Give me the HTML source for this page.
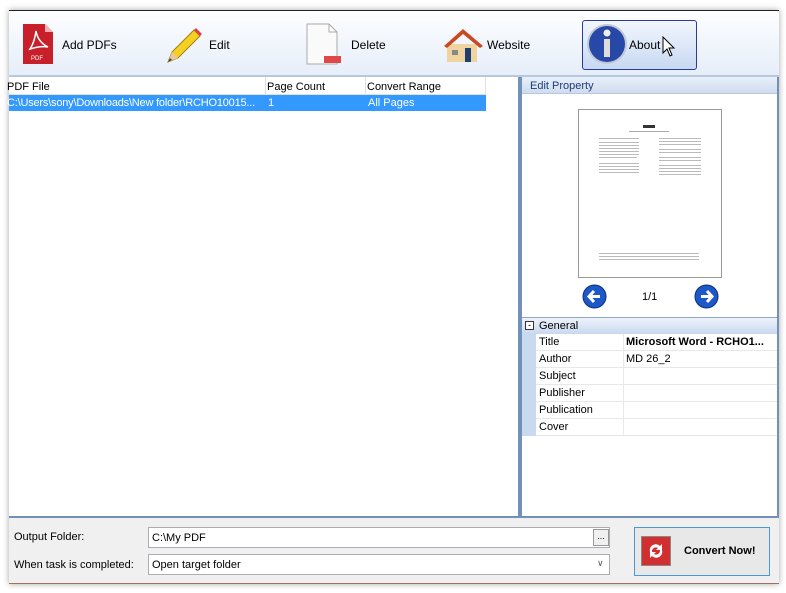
<!DOCTYPE html>
<html><head><meta charset="utf-8"><style>
*{margin:0;padding:0;box-sizing:border-box}
body{width:786px;height:593px;background:#fff;font-family:"Liberation Sans",sans-serif;font-size:11px;color:#000;position:relative;overflow:hidden}
.abs{position:absolute}
.win{left:9px;top:10px;width:770px;height:574px;border-top:1px solid #222;background:#f0f0f0;box-shadow:0 0 6px rgba(0,0,0,.35)}
.tb{left:9px;top:11px;width:770px;height:64px;background:linear-gradient(#fdfeff,#e6eef9)}
.lbl{font-size:12px}
.frame{background:#7191b9}
.cell{position:absolute;border-bottom:1px solid #e8e8e8;height:17px;line-height:17px;font-size:11px}
</style></head><body>
<div class="abs win"></div>
<div class="abs tb"></div>
<div class="abs" style="left:9px;top:75px;width:770px;height:2px;background:#b8c8dc"></div>
<svg class="abs" style="left:22px;top:23px" width="32" height="42"><path d="M1 1h22l8 8v32H1z" fill="#c8202a"/><path d="M23 1v8h8z" fill="#f2b0b0"/><path d="M8 26c4-6 5-12 6-18 1 6 4 12 12 16-6-1-12 0-18 2z" fill="none" stroke="#fff" stroke-width="1.5"/><text x="9" y="37" font-size="6" fill="#fff" font-family="Liberation Sans">PDF</text></svg>
<div class="abs lbl" style="left:62px;top:38px">Add PDFs</div>
<svg class="abs" style="left:162px;top:26px" width="40" height="40"><path d="M6 36l4-10 22-22 6 6-22 22z" fill="#f4d020" stroke="#a08010"/><path d="M6 36l4-10 6 6z" fill="#e8c8a0"/><path d="M6 36l2-4 2 2z" fill="#444"/><path d="M32 4l6 6 2-2-6-6z" fill="#e04050"/></svg>
<div class="abs lbl" style="left:209px;top:38px">Edit</div>
<svg class="abs" style="left:306px;top:23px" width="36" height="42"><path d="M1 1h22l8 8v32H1z" fill="#fafafa" stroke="#aaa"/><path d="M23 1v8h8" fill="none" stroke="#aaa"/><rect x="18" y="33" width="17" height="7" fill="#e04848"/></svg>
<div class="abs lbl" style="left:351px;top:38px">Delete</div>
<svg class="abs" style="left:443px;top:26px" width="42" height="38"><path d="M4 18h30v18H4z" fill="#f0d4a0"/><path d="M1 20L20 3l20 17-3 2L20 8 4 22z" fill="#c84a20"/><rect x="22" y="22" width="6" height="14" fill="#1f3f6f"/><rect x="9" y="24" width="6" height="5" fill="#888"/></svg>
<div class="abs lbl" style="left:487px;top:38px">Website</div>
<div class="abs" style="left:582px;top:20px;width:115px;height:50px;border:1px solid #2a3c9a;border-radius:3px;background:linear-gradient(#f2f6fd,#dde8f8 50%,#c8d8f2)"></div>
<svg class="abs" style="left:585px;top:22px" width="44" height="44"><circle cx="22" cy="22" r="20" fill="#c0c8d8"/><circle cx="22" cy="22" r="18" fill="#2848a8"/><circle cx="22" cy="11" r="3.5" fill="#eee"/><rect x="19" y="17" width="6" height="18" fill="#ddd"/></svg>
<div class="abs lbl" style="left:629px;top:38px">About</div>
<svg class="abs" style="left:662px;top:36px" width="14" height="22"><path d="M1 1v16l4-4 3 7 2-1-3-7h5z" fill="#fff" stroke="#000"/></svg>
<div class="abs" style="left:9px;top:77px;width:510px;height:440px;background:#fff"></div>
<div class="abs" style="left:9px;top:77px;width:477px;height:18px;border-bottom:1px solid #e0e0e0"></div>
<div class="abs" style="left:265px;top:77px;width:1px;height:17px;background:#e0e0e0"></div>
<div class="abs" style="left:365px;top:77px;width:1px;height:17px;background:#e0e0e0"></div>
<div class="abs" style="left:485px;top:77px;width:1px;height:17px;background:#e0e0e0"></div>
<div class="abs" style="left:7px;top:81px;font-size:11px">PDF File</div>
<div class="abs" style="left:267px;top:81px;font-size:11px">Page Count</div>
<div class="abs" style="left:367px;top:81px;font-size:11px">Convert Range</div>
<div class="abs" style="left:9px;top:95px;width:477px;height:16px;background:#3399ff"></div>
<div class="abs" style="left:7px;top:97px;width:258px;overflow:hidden;color:#fff;font-size:11px;white-space:nowrap;letter-spacing:-0.2px">C:\Users\sony\Downloads\New folder\RCHO10015...</div>
<div class="abs" style="left:268px;top:97px;color:#fff;font-size:11px">1</div>
<div class="abs" style="left:368px;top:97px;color:#fff;font-size:11px">All Pages</div>
<div class="abs frame" style="left:518px;top:77px;width:4px;height:441px"></div>
<div class="abs frame" style="left:9px;top:516px;width:769px;height:2px"></div>
<div class="abs frame" style="left:777px;top:77px;width:2px;height:441px"></div>
<div class="abs" style="left:522px;top:77px;width:255px;height:439px;background:#fff"></div>
<div class="abs" style="left:522px;top:77px;width:255px;height:17px;background:linear-gradient(#e8f0fa,#cfdcef);border-bottom:1px solid #b8c8e0"></div>
<div class="abs" style="left:530px;top:80px;color:#1e3c78;font-size:11px">Edit Property</div>
<div class="abs" style="left:578px;top:109px;width:144px;height:169px;border:1px solid #999;background:#fff"></div>
<svg class="abs" style="left:579px;top:110px" width="142" height="166"><rect x="64" y="15" width="12" height="3" fill="#333"/><rect x="50" y="21" width="40" height="1" fill="#aaa"/><g fill="#bbb"><rect x="20" y="28" width="40" height="1"/><rect x="20" y="32" width="40" height="1"/><rect x="20" y="35" width="40" height="1"/><rect x="20" y="38" width="40" height="1"/><rect x="20" y="41" width="40" height="1"/><rect x="20" y="44" width="40" height="1"/><rect x="20" y="47" width="38" height="1"/><rect x="20" y="53" width="40" height="1"/><rect x="20" y="56" width="40" height="1"/><rect x="20" y="59" width="40" height="1"/><rect x="20" y="62" width="40" height="1"/><rect x="80" y="28" width="42" height="1"/><rect x="80" y="31" width="42" height="1"/><rect x="80" y="34" width="42" height="1"/><rect x="80" y="39" width="42" height="1"/><rect x="80" y="42" width="42" height="1"/><rect x="80" y="47" width="42" height="1"/><rect x="80" y="50" width="42" height="1"/><rect x="80" y="55" width="42" height="1"/><rect x="80" y="58" width="42" height="1"/><rect x="80" y="61" width="42" height="1"/><rect x="80" y="64" width="42" height="1"/><rect x="20" y="143" width="100" height="1"/><rect x="20" y="146" width="100" height="1"/><rect x="20" y="149" width="100" height="1"/></g></svg>
<svg class="abs" style="left:582px;top:284px" width="25" height="25"><circle cx="12.5" cy="12.5" r="11.5" fill="#1e58c8" stroke="#0c2e7a"/><path d="M18 12.5H8M12 7l-5 5.5 5 5.5" stroke="#fff" stroke-width="3" fill="none"/></svg>
<div class="abs" style="left:642px;top:291px;font-size:11px">1/1</div>
<svg class="abs" style="left:694px;top:284px" width="25" height="25"><circle cx="12.5" cy="12.5" r="11.5" fill="#1e58c8" stroke="#0c2e7a"/><path d="M7 12.5h10M13 7l5 5.5-5 5.5" stroke="#fff" stroke-width="3" fill="none"/></svg>
<div class="abs" style="left:522px;top:317px;width:255px;height:1px;background:#8ea8c8"></div>
<div class="abs" style="left:522px;top:318px;width:255px;height:16px;background:linear-gradient(#eef3fb,#c9d8ef)"></div>
<div class="abs" style="left:522px;top:334px;width:14px;height:102px;background:#c8d9f0"></div>
<div class="abs" style="left:525px;top:321px;width:9px;height:9px;border:1px solid #333;background:#fff;font-size:9px;line-height:6px;text-align:center">-</div>
<div class="abs" style="left:539px;top:320px;font-size:11px">General</div>
<div class="abs" style="left:623px;top:334px;width:1px;height:102px;background:#e8e8e8"></div>
<div class="cell" style="left:536px;top:334px;width:241px;padding-left:3px">Title<b class="abs" style="left:90px;top:0;white-space:nowrap">Microsoft Word - RCHO1...</b></div>
<div class="cell" style="left:536px;top:351px;width:241px;padding-left:3px">Author<span class="abs" style="left:90px">MD 26_2</span></div>
<div class="cell" style="left:536px;top:368px;width:241px;padding-left:3px">Subject</div>
<div class="cell" style="left:536px;top:385px;width:241px;padding-left:3px">Publisher</div>
<div class="cell" style="left:536px;top:402px;width:241px;padding-left:3px">Publication</div>
<div class="cell" style="left:536px;top:419px;width:241px;padding-left:3px">Cover</div>
<div class="abs" style="left:14px;top:531px;font-size:11px">Output Folder:</div>
<div class="abs" style="left:14px;top:559px;font-size:11px">When task is completed:</div>
<div class="abs" style="left:148px;top:527px;width:462px;height:21px;border:1px solid #abadb3;background:#fff;padding:4px 0 0 3px;font-size:11px">C:\My PDF</div>
<div class="abs" style="left:593px;top:529px;width:16px;height:17px;border:1px solid #999;background:#f0f0f0;font-size:9px;text-align:center;line-height:12px">...</div>
<div class="abs" style="left:148px;top:554px;width:462px;height:21px;border:1px solid #abadb3;background:#fff;padding:4px 0 0 3px;font-size:11px">Open target folder</div>
<div class="abs" style="left:597px;top:558px;font-size:9px;color:#555">&#8744;</div>
<div class="abs" style="left:634px;top:527px;width:136px;height:49px;border:1px solid #4a9ad8;background:#e8e8e8"></div>
<svg class="abs" style="left:641px;top:536px" width="30" height="30"><rect x="0.5" y="0.5" width="29" height="29" fill="#d03030" stroke="#888"/><path d="M9 16a6 6 0 0 1 10-6l2-2v6h-6l2-2a4 4 0 0 0-6 4zM21 14a6 6 0 0 1-10 6l-2 2v-6h6l-2 2a4 4 0 0 0 6-4z" fill="#fff"/></svg>
<div class="abs" style="left:684px;top:545px;font-size:11px;font-weight:bold">Convert Now!</div>
<div class="abs" style="left:9px;top:583px;width:770px;height:1px;background:#a07060"></div>
</body></html>
